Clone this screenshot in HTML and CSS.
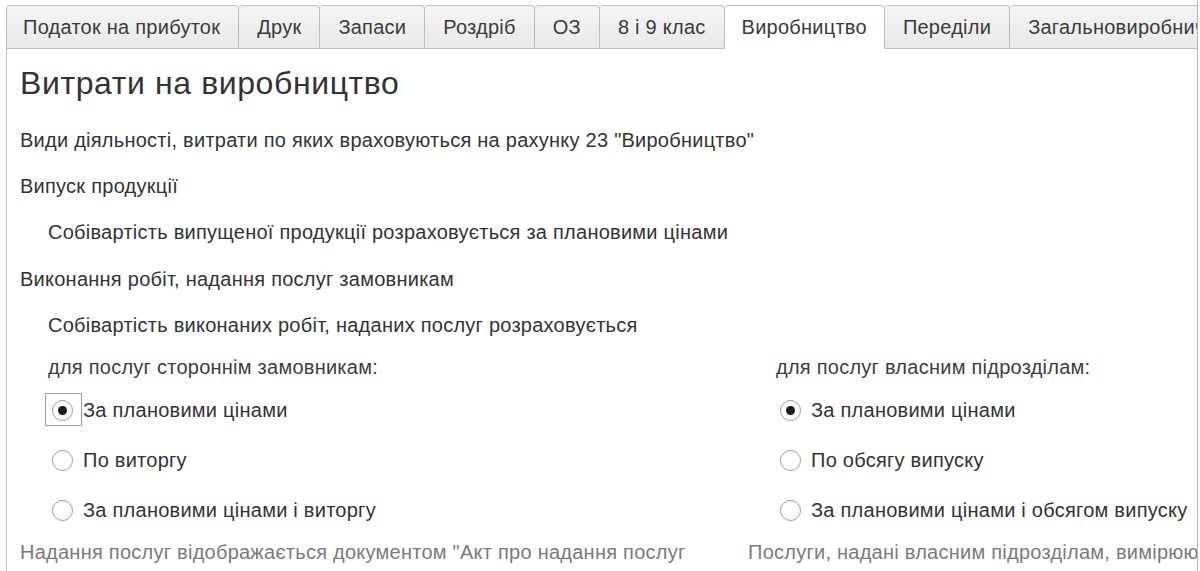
FILE: index.html
```html
<!DOCTYPE html>
<html lang="uk">
<head>
<meta charset="utf-8">
<title>Витрати на виробництво</title>
<link rel="stylesheet" href="styles.css">
</head>
<body>
<div class="frame">
  <div class="tabs">
    <div class="tab">Податок на прибуток</div>
    <div class="tab">Друк</div>
    <div class="tab">Запаси</div>
    <div class="tab">Роздріб</div>
    <div class="tab">ОЗ</div>
    <div class="tab">8 і 9 клас</div>
    <div class="tab active">Виробництво</div>
    <div class="tab">Переділи</div>
    <div class="tab">Загальновиробничі витрати</div>
  </div>
  <div class="panel">
    <h1 class="title">Витрати на виробництво</h1>
    <div class="row">Види діяльності, витрати по яких враховуються на рахунку 23 "Виробництво"</div>
    <div class="row">Випуск продукції</div>
    <div class="row indent">Собівартість випущеної продукції розраховується за плановими цінами</div>
    <div class="row">Виконання робіт, надання послуг замовникам</div>
    <div class="row indent">Собівартість виконаних робіт, наданих послуг розраховується</div>
    <div class="cols">
      <div class="col">
        <div class="caption">для послуг стороннім замовникам:</div>
        <div class="option focused"><span class="radio checked"></span><span class="label">За плановими цінами</span></div>
        <div class="option"><span class="radio"></span><span class="label">По виторгу</span></div>
        <div class="option"><span class="radio"></span><span class="label">За плановими цінами і виторгу</span></div>
        <div class="note wrap">Надання послуг відображається документом "Акт про надання послуг замовникам"</div>
      </div>
      <div class="col">
        <div class="caption">для послуг власним підрозділам:</div>
        <div class="option"><span class="radio checked"></span><span class="label">За плановими цінами</span></div>
        <div class="option"><span class="radio"></span><span class="label">По обсягу випуску</span></div>
        <div class="option"><span class="radio"></span><span class="label">За плановими цінами і обсягом випуску</span></div>
        <div class="note">Послуги, надані власним підрозділам, вимірюються в натуральних одиницях</div>
      </div>
    </div>
  </div>
</div>
</body>
</html>
```
FILE: styles.css
```css
html, body {
  margin: 0;
  padding: 0;
  background: #ffffff;
}

body {
  font-family: "Liberation Sans", Arial, sans-serif;
  font-size: 20px;
  letter-spacing: 0.25px;
  color: #333333;
}

.frame {
  width: 1191px;
  height: 571px;
  padding-left: 6px;
  border-right: 1px solid #b8b8b8;
  overflow: hidden;
  box-sizing: content-box;
}

/* tab strip */
.tabs {
  display: flex;
  margin-top: 5px;
  height: 44px;
  white-space: nowrap;
}

.tab {
  flex: none;
  height: 44px;
  box-sizing: border-box;
  padding: 0 18px;
  line-height: 43px;
  background: linear-gradient(#f4f4f4, #e9e9e9);
  border: 1px solid #bdbdbd;
  border-left-width: 0;
  border-radius: 4px 4px 0 0;
  color: #3a3a3a;
}

.tab:first-child {
  border-left-width: 1px;
  padding-left: 16px;
}

.tab.active {
  background: #ffffff;
  border-bottom-color: #ffffff;
  padding: 0 17px;
}

/* page body */
.panel {
  border-left: 1px solid #c4c4c4;
  height: 540px;
  padding-left: 13px;
}

.title {
  margin: 0;
  padding-top: 16px;
  height: 52px;
  line-height: 36px;
  font-size: 32px;
  font-weight: normal;
  color: #333333;
  letter-spacing: 0.6px;
}

.row {
  height: 46.2px;
  line-height: 46px;
  white-space: nowrap;
}

.indent {
  padding-left: 28px;
}

.cols {
  display: grid;
  grid-template-columns: 728px 1fr;
}

.col {
  min-width: 0;
  white-space: nowrap;
}

.caption {
  padding-left: 28px;
  height: 38px;
  line-height: 38px;
  color: #3d3d3d;
}

.option {
  display: flex;
  align-items: center;
  height: 50px;
  margin-left: 28px;
  position: relative;
}

.radio {
  flex: none;
  width: 19px;
  height: 19px;
  margin-left: 4px;
  margin-right: 10px;
  border: 1.5px solid #9a9a9a;
  border-radius: 50%;
  background: #ffffff;
  position: relative;
}

.radio.checked::after {
  content: "";
  position: absolute;
  left: 50%;
  top: 50%;
  width: 9px;
  height: 9px;
  margin: -4.5px 0 0 -4.5px;
  border-radius: 50%;
  background: #1a1a1a;
}

.option.focused::before {
  content: "";
  position: absolute;
  left: -3px;
  top: 7px;
  width: 35px;
  height: 31px;
  border: 1px solid #9c9c9c;
}

.label {
  color: #333333;
}

.note {
  line-height: 32px;
  color: #7a7a7a;
}

.note.wrap {
  white-space: normal;
  width: 705px;
}
```
